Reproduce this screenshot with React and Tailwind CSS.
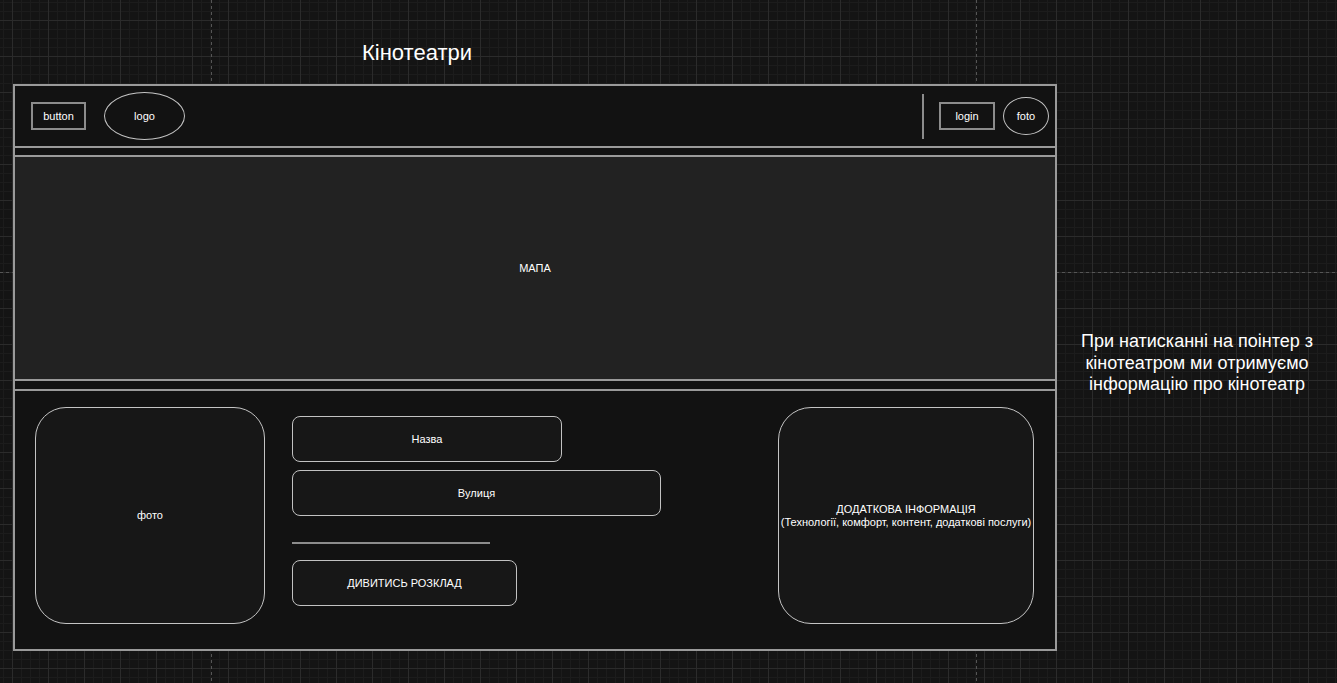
import React from 'react';

const rect = 'flex items-center justify-center border-2 border-[#8c8c8c] text-[11px] text-white';
const pill = 'flex items-center justify-center rounded-[8px] border border-[#c2c2c2] bg-[#171717] text-[11px] text-white';

export default function App() {
  return (
    <div
      className="flex h-[683px] w-full items-start overflow-hidden bg-[#141414] font-['Liberation_Sans',Arial,sans-serif] text-white bg-[linear-gradient(to_bottom,#555_50%,transparent_50%),linear-gradient(to_bottom,#555_50%,transparent_50%),linear-gradient(to_right,#555_50%,transparent_50%),linear-gradient(to_right,#2b2b2b_1px,transparent_1px),linear-gradient(to_bottom,#2b2b2b_1px,transparent_1px),linear-gradient(to_right,#1c1c1c_1px,transparent_1px),linear-gradient(to_bottom,#1c1c1c_1px,transparent_1px)] [background-size:1px_6px,1px_6px,6px_1px,36px_36px,36px_36px,9px_9px,9px_9px] [background-position:211px_0,976px_0,0_272px,12px_20px,12px_20px,12px_20px,12px_20px] [background-repeat:repeat-y,repeat-y,repeat-x,repeat,repeat,repeat,repeat]"
    >
      {/* Wireframe column */}
      <div className="ml-[13px] w-[1044px] shrink-0">
        <div className="mt-[40px] mb-[18px] pl-[349px] text-[22px] leading-[26px]">Кінотеатри</div>

        <div className="flex h-[567px] flex-col border-2 border-[#9a9a9a] bg-[#121212]">
          {/* Header */}
          <div className="flex h-[62px] shrink-0 items-center border-b-2 border-[#9a9a9a] pl-[16px] pr-[6px]">
            <div className={`${rect} h-[28px] w-[55px]`}>button</div>
            <div className="ml-[18px] flex h-[48px] w-[81px] items-center justify-center rounded-[50%] border border-[#c4c4c4] text-[11px]">
              logo
            </div>
            <div className="ml-auto h-[45px] w-[2px] bg-[#8c8c8c]" />
            <div className={`${rect} ml-[15px] h-[28px] w-[56px]`}>login</div>
            <div className="ml-[8px] flex h-[38px] w-[46px] items-center justify-center rounded-[50%] border border-[#c4c4c4] text-[11px]">
              foto
            </div>
          </div>

          <div className="h-[7px] shrink-0" />

          {/* Map */}
          <div className="flex h-[226px] shrink-0 items-center justify-center border-y-2 border-[#9a9a9a] bg-[#222222] text-[11px]">
            МАПА
          </div>

          <div className="h-[8px] shrink-0" />

          {/* Cinema info */}
          <div className="flex flex-1 items-start border-t-2 border-[#9a9a9a] pl-[20px] pr-[21px] pt-[16px]">
            <div className="flex h-[217px] w-[230px] items-center justify-center rounded-[31px] border border-[#c4c4c4] bg-[#171717] text-[11px]">
              фото
            </div>

            <div className="ml-[27px] mt-[9px] flex flex-col items-start">
              <div className={`${pill} h-[46px] w-[270px]`}>Назва</div>
              <div className={`${pill} mt-[8px] h-[46px] w-[369px]`}>Вулиця</div>
              <div className="mt-[26px] h-[2px] w-[198px] bg-[#8c8c8c]" />
              <div className={`${pill} mt-[16px] h-[46px] w-[225px]`}>ДИВИТИСЬ РОЗКЛАД</div>
            </div>

            <div className="ml-auto flex h-[217px] w-[256px] flex-col items-center justify-center rounded-[33px] border border-[#c4c4c4] bg-[#171717] text-center text-[11px] leading-[13px]">
              <span>ДОДАТКОВА ІНФОРМАЦІЯ</span>
              <span>(Технології, комфорт, контент, додаткові послуги)</span>
            </div>
          </div>
        </div>
      </div>

      {/* Note */}
      <p className="ml-[5px] mt-[331px] w-[270px] text-center text-[18px] leading-[21.5px]">
        При натисканні на поінтер з кінотеатром ми отримуємо інформацію про кінотеатр
      </p>
    </div>
  );
}
